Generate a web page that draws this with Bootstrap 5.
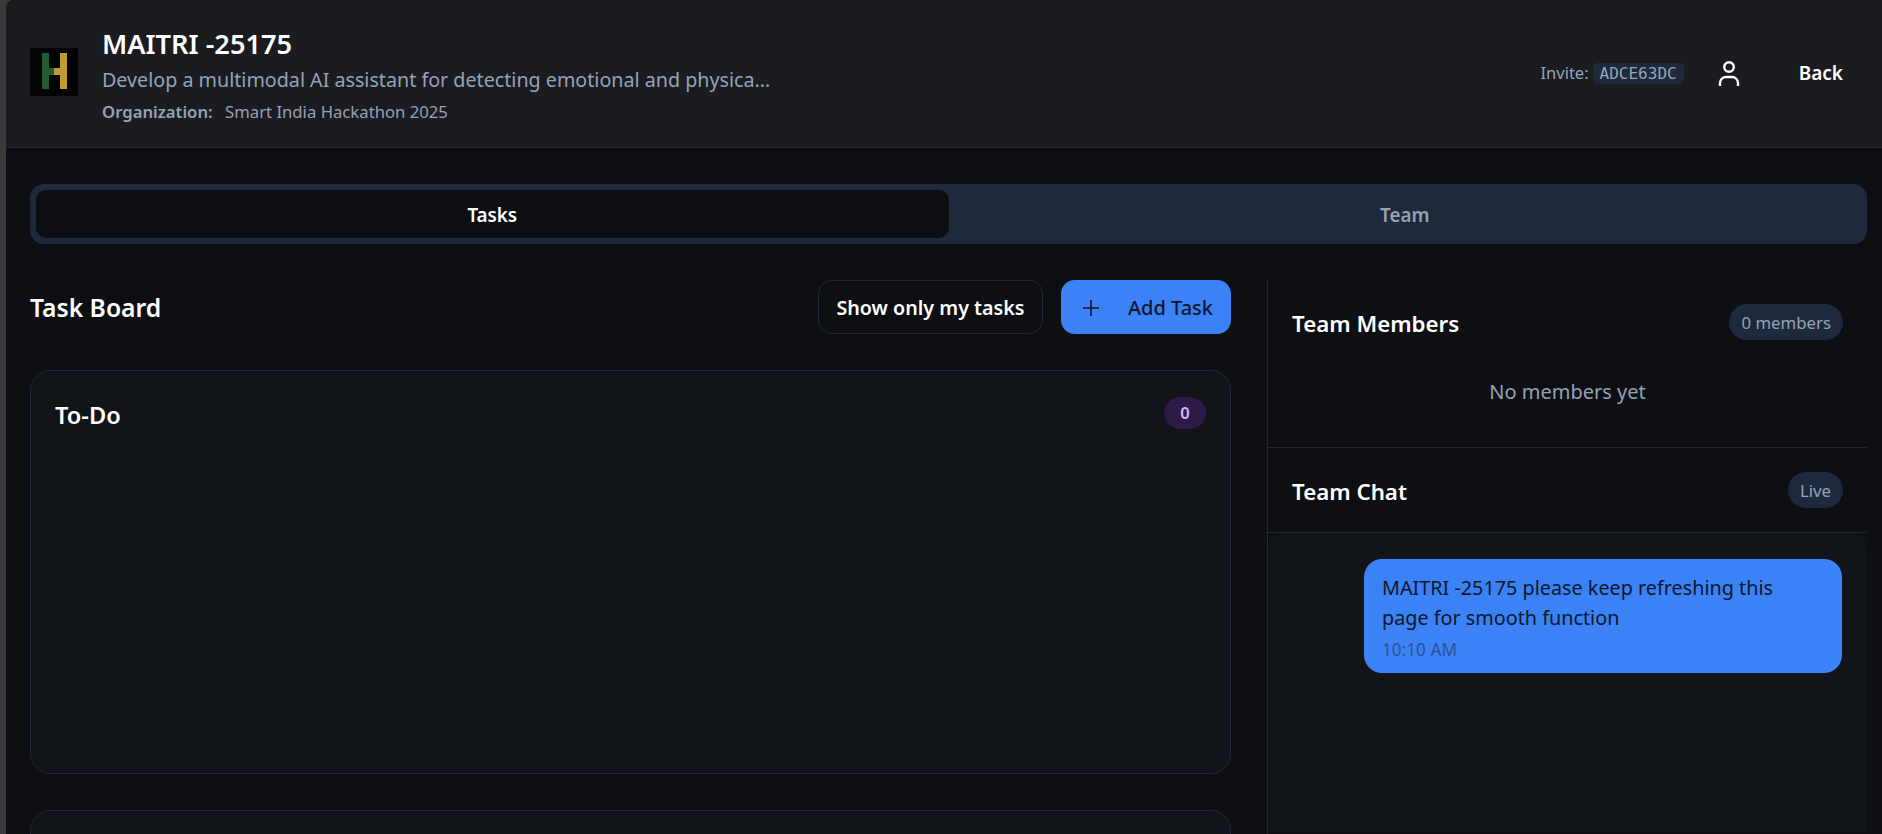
<!doctype html>
<html lang="en">
<head>
<meta charset="utf-8">
<title>MAITRI -25175</title>
<link href="https://cdn.jsdelivr.net/npm/bootstrap@5.3.0/dist/css/bootstrap.min.css" rel="stylesheet">
<style>
html,body{height:100%;overflow:hidden}
body{background:#3a3a3a;font-family:"Noto Sans","Open Sans",sans-serif;color:#fff;padding-left:6px}
.shell{background:#0d0f13;height:834px;overflow:hidden;border-top-left-radius:8px}
.topbar{height:148px;background:#1a1c20;border-bottom:1px solid #1e293b;padding:0 39px 0 24px}
.logo{width:48px;height:48px;margin:0 24px 4px 0;flex:none}
.txtb{padding-top:2px}
.ttl{font-size:27.2px;font-weight:600;line-height:36px;margin:0 0 4px}
.sub{font-size:19.7px;line-height:28px;color:#94a3b8;margin:0 0 6px}
.org{font-size:16.7px;line-height:24px;color:#94a3b8}
.org b{font-weight:600;margin-right:8px}
.inv{font-size:16.5px;color:#94a3b8}
.code{font-family:"DejaVu Sans Mono","Liberation Mono",monospace;font-size:16px;background:#1e293b;border-radius:5px;padding:1px 7px;color:#94a3b8;margin-left:4px}
.usr{margin:0 56px 0 31px;width:28px;height:28px;flex:none}
.bk{font-size:19px;font-weight:600;color:#fff}
.main{padding:36px 15px 0 24px}
.tabsbar{background:#1e293b;border-radius:14px;padding:6px;height:60px}
.tabx{flex:1 1 0;border-radius:10px;font-size:18.8px;font-weight:600;color:#94a3b8;padding-top:3px}
.tabx.on{background:#0d0f13;color:#fff}
.cols{margin-top:36px;gap:36px}
.lft{width:1201px;flex:none}
.rgt{flex:1 1 0;border-left:1px solid #1e293b;height:600px}
.hd{font-size:24.7px;font-weight:600;margin:0;line-height:32px;padding-top:2px}
.btnx{height:54px;border-radius:14px;font-size:19.7px}
.tools{gap:18px}
.btn-ghost{background:#0d0f13;border:1px solid #1e293b;color:#fff;font-weight:600;width:225px;padding:2px 0 0}
.btn-add{background:#3b82f6;border:0;color:#0f172a;font-weight:500;width:170px;padding:2px 18px 0 22px;font-size:20px}
.col-card{background:#111418;border:1px solid #1e293b;border-radius:20px;height:404px;padding:27px 24px 24px;margin-top:36px}
.hd2{font-size:22.3px;font-weight:600;margin:0;line-height:30px;padding-top:4px}
.hd3{font-size:23.6px;padding-top:2px}
.cnt{background:#2e1a47;color:#d8b4fe;border-radius:16px;width:42px;height:32px;font-size:16.5px;font-weight:600;margin-top:-2px}
.sec{padding:24px}
.s1{height:168px;border-bottom:1px solid #1e293b}
.s2{height:85px;border-bottom:1px solid #1e293b}
.none{color:#94a3b8;font-size:20px;margin:37px 0 0;text-align:center}
.chip{background:#1e293b;color:#94a3b8;border-radius:18px;height:36px;padding:1px 12px 0;font-size:16.8px}
.chatbox{background:#111418;padding:26px 25px 25px 24px;height:300px;border-radius:14px 14px 0 0}
.bubble{background:#3b82f6;color:#0f172a;border-radius:18px;width:478px;height:114px;padding:14px 40px 0 18px;font-size:19.8px;line-height:30px;margin-left:auto}
.tm{font-size:17.2px;line-height:24px;color:#2f5391;margin-top:5px}
</style>
</head>
<body>
<div class="shell">
<header class="topbar d-flex align-items-center">
  <svg class="logo" viewBox="0 0 48 48"><defs><filter id="sb"><feGaussianBlur stdDeviation=".7"/></filter></defs><rect width="48" height="48" fill="#030403"/><g filter="url(#sb)"><rect x="12" y="5" width="7" height="36" fill="#235c36"/><rect x="19" y="20" width="5" height="7" fill="#235c36"/><rect x="24" y="20" width="6" height="7" fill="#c09a30"/><rect x="30" y="5" width="7" height="36" fill="#c09a30"/></g></svg>
  <div class="flex-grow-1 txtb">
    <h1 class="ttl">MAITRI -25175</h1>
    <p class="sub">Develop a multimodal AI assistant for detecting emotional and physica...</p>
    <div class="org"><b>Organization:</b> Smart India Hackathon 2025</div>
  </div>
  <span class="inv">Invite:<span class="code">ADCE63DC</span></span>
  <svg class="usr" viewBox="0 0 28 28" fill="none" stroke="#fff" stroke-width="2.4"><circle cx="14" cy="7" r="4.8"/><path d="M5 26v-3a6 6 0 0 1 6-6h6a6 6 0 0 1 6 6v3"/></svg>
  <span class="bk">Back</span>
</header>
<main class="main">
  <div class="tabsbar d-flex">
    <div class="tabx on d-flex align-items-center justify-content-center">Tasks</div>
    <div class="tabx d-flex align-items-center justify-content-center">Team</div>
  </div>
  <div class="cols d-flex">
    <section class="lft">
      <div class="d-flex align-items-center justify-content-between">
        <h2 class="hd">Task Board</h2>
        <div class="d-flex tools">
          <button class="btnx btn-ghost">Show only my tasks</button>
          <button class="btnx btn-add d-flex align-items-center justify-content-between"><svg width="16" height="16" viewBox="0 0 16 16" stroke="#0f172a" stroke-width="1.6"><path d="M8 0v16M0 8h16"/></svg><span>Add Task</span></button>
        </div>
      </div>
      <div class="col-card">
        <div class="d-flex align-items-center justify-content-between">
          <h3 class="hd2 hd3">To-Do</h3>
          <span class="cnt d-flex align-items-center justify-content-center">0</span>
        </div>
      </div>
      <div class="col-card"></div>
    </section>
    <aside class="rgt">
      <div class="sec s1">
        <div class="d-flex align-items-center justify-content-between">
          <h3 class="hd2">Team Members</h3>
          <span class="chip d-flex align-items-center">0 members</span>
        </div>
        <p class="none">No members yet</p>
      </div>
      <div class="sec s2">
        <div class="d-flex align-items-center justify-content-between">
          <h3 class="hd2">Team Chat</h3>
          <span class="chip d-flex align-items-center">Live</span>
        </div>
      </div>
      <div class="chatbox">
        <div class="bubble">MAITRI -25175 please keep refreshing this page for smooth function
          <div class="tm">10:10 AM</div>
        </div>
      </div>
    </aside>
  </div>
</main>
</div>
</body>
</html>
